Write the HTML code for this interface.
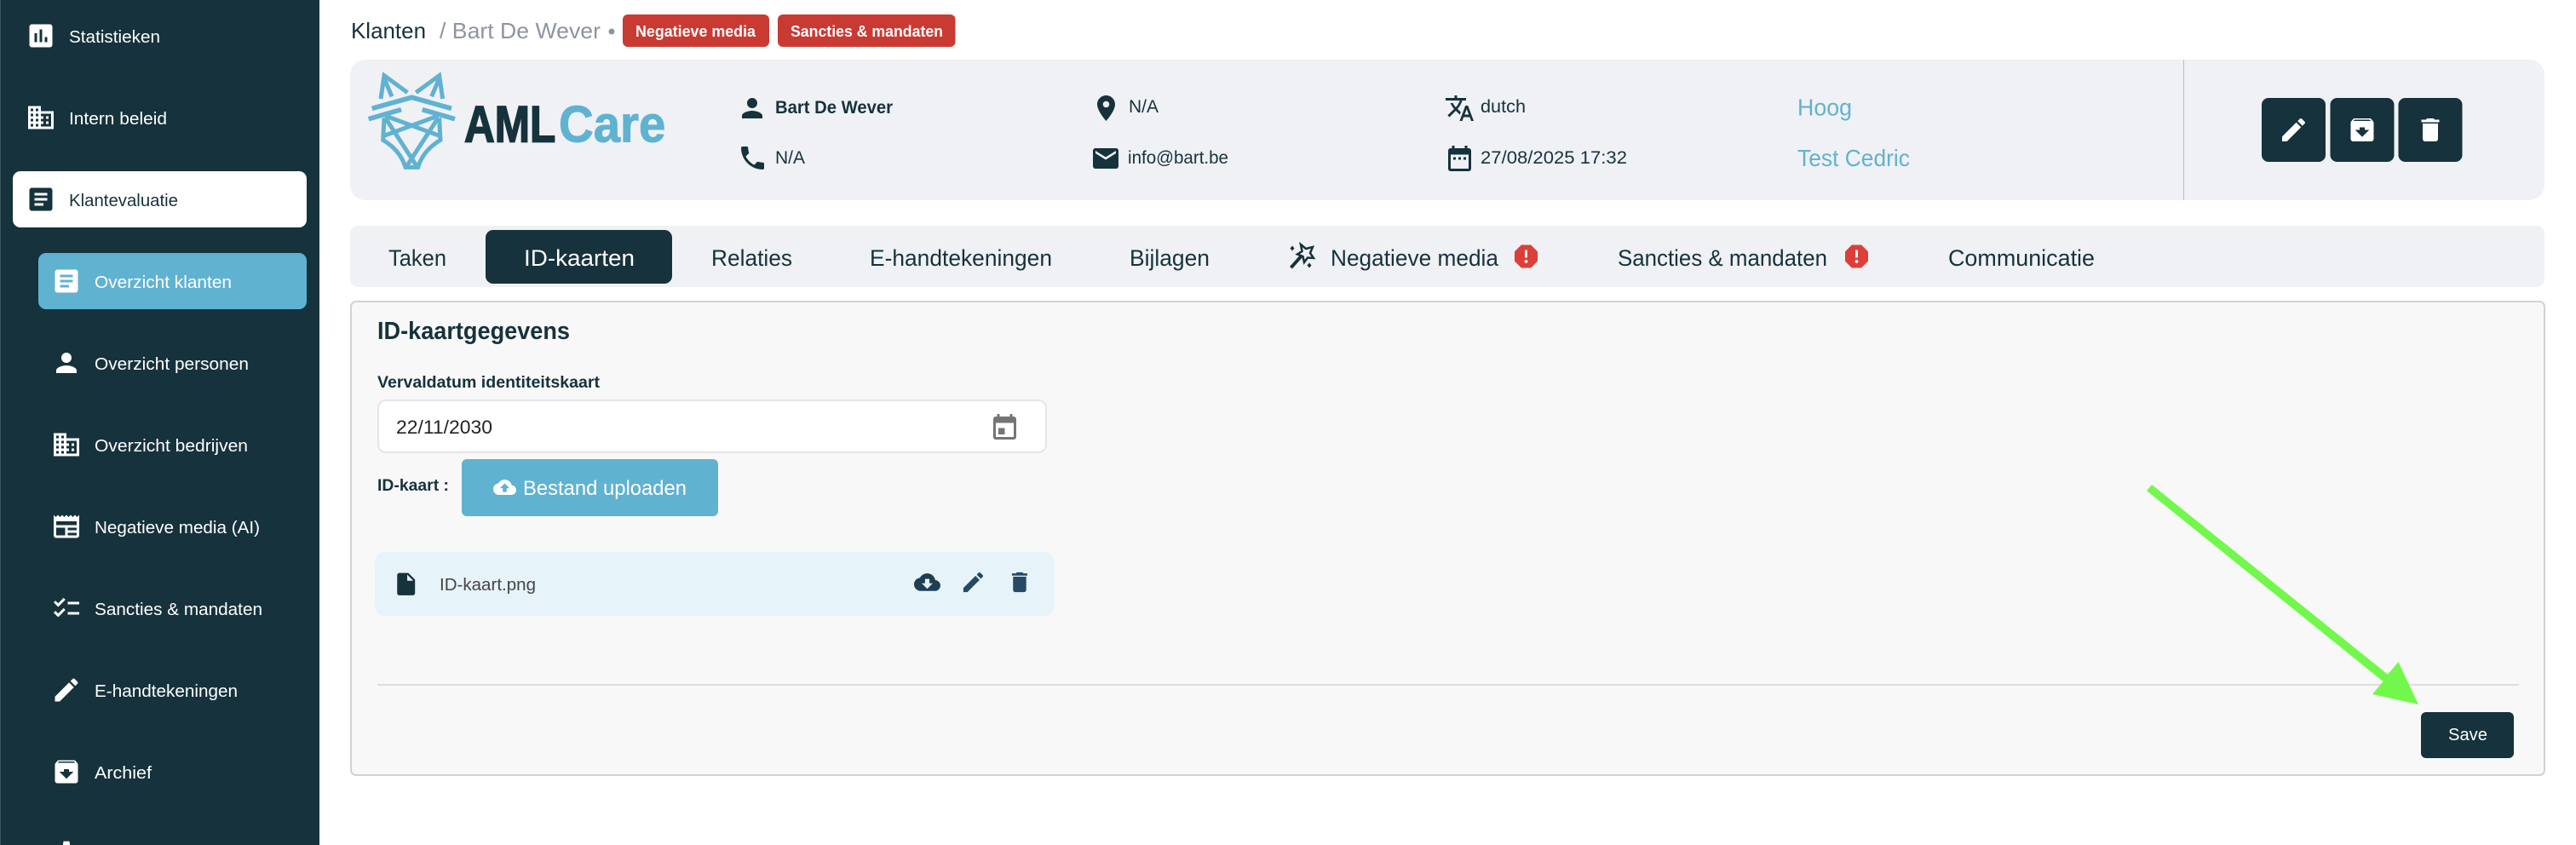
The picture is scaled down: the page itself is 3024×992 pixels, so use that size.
<!DOCTYPE html>
<html lang="nl">
<head>
<meta charset="utf-8">
<title>AMLCare - Klanten</title>
<style>
html,body{margin:0;padding:0;background:#fff;width:3024px;height:992px;overflow:hidden}
svg{display:block}
text{font-family:"Liberation Sans",sans-serif}
.s{font-size:20.7px;fill:#fff}
.t{font-size:26.5px;fill:#16323c}
.i{font-size:21px;fill:#16323c}
.b{font-size:18px;font-weight:700;fill:#fff}
.h{font-size:28px;fill:#60b2d1}
</style>
</head>
<body>
<svg xmlns="http://www.w3.org/2000/svg" width="3024" height="992" viewBox="0 0 3024 992">
<defs>
<path id="assess" d="M19 3H5c-1.1 0-2 .9-2 2v14c0 1.1.9 2 2 2h14c1.1 0 2-.9 2-2V5c0-1.1-.9-2-2-2zM9 17H7v-7h2v7zm4 0h-2V7h2v10zm4 0h-2v-4h2v4z"/>
<path id="domain" d="M12 7V3H2v18h20V7H12zM6 19H4v-2h2v2zm0-4H4v-2h2v2zm0-4H4V9h2v2zm0-4H4V5h2v2zm4 12H8v-2h2v2zm0-4H8v-2h2v2zm0-4H8V9h2v2zm0-4H8V5h2v2zm10 12h-8v-2h2v-2h-2v-2h2v-2h-2V9h8v10zm-2-8h-2v2h2v-2zm0 4h-2v2h2v-2z"/>
<path id="article" d="M19 3H5c-1.1 0-2 .9-2 2v14c0 1.1.9 2 2 2h14c1.1 0 2-.9 2-2V5c0-1.1-.9-2-2-2zm-5 14H7v-2h7v2zm3-4H7v-2h10v2zm0-4H7V7h10v2z"/>
<path id="person" d="M12 12c2.21 0 4-1.79 4-4s-1.79-4-4-4-4 1.79-4 4 1.79 4 4 4zm0 2c-2.67 0-8 1.34-8 4v2h16v-2c0-2.66-5.33-4-8-4z"/>
<path id="news" d="M22 3l-1.67 1.67L18.67 3 17 4.67 15.33 3l-1.66 1.67L12 3l-1.67 1.67L8.67 3 7 4.67 5.33 3 3.67 4.67 2 3v16c0 1.1.9 2 2 2h16c1.1 0 2-.9 2-2V3zM11 19H4v-6h7v6zm9 0h-7v-2h7v2zm0-4h-7v-2h7v2zm0-4H4V8h16v3z"/>
<path id="check" d="M22 7h-9v2h9V7zm0 8h-9v2h9v-2zM5.54 11L2 7.46l1.41-1.41 2.12 2.12 4.24-4.24 1.41 1.41L5.54 11zm0 8L2 15.46l1.41-1.41 2.12 2.12 4.24-4.24 1.41 1.41L5.54 19z"/>
<path id="edit" d="M3 17.25V21h3.75L17.81 9.94l-3.75-3.75L3 17.25zM20.71 7.04c.39-.39.39-1.02 0-1.41l-2.34-2.34c-.39-.39-1.02-.39-1.41 0l-1.83 1.83 3.75 3.75 1.83-1.83z"/>
<path id="archive" d="M20.54 5.23l-1.39-1.68C18.88 3.21 18.47 3 18 3H6c-.47 0-.88.21-1.16.55L3.46 5.23C3.17 5.57 3 6.02 3 6.5V19c0 1.1.9 2 2 2h14c1.1 0 2-.9 2-2V6.500c0-.48-.17-.93-.46-1.27zM12 17.5L6.5 12H10v-2h4v2h3.5L12 17.5zM5.12 5l.81-1h12l.94 1H5.12z"/>
<path id="del" d="M6 19c0 1.1.9 2 2 2h8c1.1 0 2-.9 2-2V7H6v12zM19 4h-3.5l-1-1h-5l-1 1H5v2h14V4z"/>
<path id="gear" d="M19.14,12.94c0.04-0.3,0.06-0.61,0.06-0.94c0-0.32-0.02-0.64-0.07-0.94l2.03-1.58c0.18-0.14,0.23-0.41,0.12-0.61l-1.92-3.32c-0.12-0.22-0.37-0.29-0.59-0.22l-2.39,0.96c-0.5-0.38-1.03-0.7-1.62-0.94L14.4,2.81c-0.04-0.24-0.24-0.41-0.48-0.41h-3.84c-0.24,0-0.43,0.17-0.47,0.41L9.25,5.35C8.66,5.59,8.12,5.92,7.63,6.29L5.24,5.33c-0.22-0.08-0.47,0-0.59,0.22L2.74,8.87C2.62,9.08,2.66,9.34,2.86,9.48l2.03,1.58C4.84,11.36,4.8,11.69,4.8,12s0.02,0.64,0.07,0.94l-2.03,1.58c-0.18,0.14-0.23,0.41-0.12,0.61l1.92,3.32c0.12,0.22,0.37,0.29,0.59,0.22l2.39-0.96c0.5,0.38,1.03,0.7,1.62,0.94l0.36,2.54c0.05,0.24,0.24,0.41,0.48,0.41h3.84c0.24,0,0.44-0.17,0.47-0.41l0.36-2.54c0.59-0.24,1.13-0.56,1.62-0.94l2.39,0.96c0.22,0.08,0.47,0,0.59-0.22l1.92-3.32c0.12-0.22,0.07-0.47-0.12-0.61L19.14,12.94z M12,15.6c-1.98,0-3.6-1.62-3.6-3.6s1.62-3.6,3.6-3.6s3.6,1.62,3.6,3.6S13.98,15.6,12,15.6z"/>
<path id="place" d="M12 2C8.13 2 5 5.13 5 9c0 5.25 7 13 7 13s7-7.75 7-13c0-3.87-3.13-7-7-7zm0 9.5c-1.38 0-2.5-1.12-2.5-2.5s1.12-2.5 2.5-2.5 2.5 1.12 2.5 2.5-1.12 2.5-2.5 2.5z"/>
<path id="phone" d="M6.62 10.79c1.44 2.83 3.76 5.14 6.59 6.59l2.2-2.2c.27-.27.67-.36 1.02-.24 1.12.37 2.33.57 3.57.57.55 0 1 .45 1 1V20c0 .55-.45 1-1 1-9.39 0-17-7.61-17-17 0-.55.45-1 1-1h3.5c.55 0 1 .45 1 1 0 1.25.2 2.45.57 3.57.11.35.03.74-.25 1.02l-2.2 2.2z"/>
<path id="mail" d="M20 4H4c-1.1 0-1.99.9-1.99 2L2 18c0 1.1.9 2 2 2h16c1.1 0 2-.9 2-2V6c0-1.1-.9-2-2-2zm0 4l-8 5-8-5V6l8 5 8-5v2z"/>
<path id="trans" d="M12.87 15.07l-2.54-2.51.03-.03c1.74-1.94 2.98-4.17 3.71-6.53H17V4h-7V2H8v2H1v1.99h11.17C11.5 7.92 10.44 9.75 9 11.35 8.07 10.32 7.3 9.19 6.69 8h-2c.73 1.63 1.73 3.17 2.98 4.56l-5.09 5.02L4 19l5-5 3.11 3.11.76-2.04zM18.5 10h-2L12 22h2l1.12-3h4.75L21 22h2l-4.5-12zm-2.62 7l1.62-4.33L19.12 17h-3.24z"/>
<path id="cal" d="M9 11H7v2h2v-2zm4 0h-2v2h2v-2zm4 0h-2v2h2v-2zm2-7h-1V2h-2v2H8V2H6v2H5c-1.11 0-1.99.9-1.99 2L3 20c0 1.1.89 2 2 2h14c1.1 0 2-.9 2-2V6c0-1.1-.9-2-2-2zm0 16H5V9h14v11z"/>
<path id="event" d="M12 12H7v5h5v-5zM16 1v2H8V1H6v2H5c-1.11 0-1.99.89-1.99 2L3 19c0 1.1.89 2 2 2h14c1.1 0 2-.9 2-2V5c0-1.1-.9-2-2-2h-1V1h-2zm3 18H5V8h14v11z"/>
<path id="cup" d="M19.35 10.04C18.67 6.59 15.64 4 12 4 9.11 4 6.6 5.64 5.35 8.04 2.34 8.36 0 10.91 0 14c0 3.31 2.69 6 6 6h13c2.76 0 5-2.24 5-5 0-2.64-2.05-4.78-4.65-4.96zM14 13v4h-4v-4H7l5-5 5 5h-3z"/>
<path id="cdown" d="M19.35 10.04C18.67 6.59 15.64 4 12 4 9.11 4 6.6 5.64 5.35 8.04 2.34 8.36 0 10.91 0 14c0 3.31 2.69 6 6 6h13c2.76 0 5-2.24 5-5 0-2.64-2.05-4.78-4.65-4.96zM17 13l-5 5-5-5h3V9h4v4h3z"/>
<path id="file" d="M6 2c-1.1 0-1.99.9-1.99 2L4 20c0 1.1.89 2 2 2h12c1.1 0 2-.9 2-2V8l-6-6H6zm7 7V3.5L18.5 9H13z"/>
<path id="report" d="M15.73 3H8.27L3 8.27v7.46L8.27 21h7.46L21 15.73V8.27L15.73 3zM12 17.3c-.72 0-1.3-.58-1.3-1.3 0-.72.58-1.3 1.3-1.3.72 0 1.3.58 1.3 1.3 0 .72-.58 1.3-1.3 1.3zm1-4.3h-2V7h2v6z"/>
</defs>

<rect width="3024" height="992" fill="#fff"/>

<!-- Sidebar -->
<rect x="0" y="0" width="375" height="992" fill="#16323c"/>
<rect x="0" y="0" width="1" height="992" fill="#3b5560"/>
<rect x="15" y="201" width="345" height="66" rx="9" fill="#fff"/>
<rect x="45" y="297" width="315" height="66" rx="9" fill="#60b2d1"/>

<g fill="#fff">
<use href="#assess" transform="translate(30 24) scale(1.5)"/>
<use href="#domain" transform="translate(30 120) scale(1.5)"/>
<use href="#article" transform="translate(30 216) scale(1.5)" fill="#16323c"/>
<use href="#article" transform="translate(60 312) scale(1.5)"/>
<use href="#person" transform="translate(60 408) scale(1.5)"/>
<use href="#domain" transform="translate(60 504) scale(1.5)"/>
<use href="#news" transform="translate(60 600) scale(1.5)"/>
<use href="#check" transform="translate(60 696) scale(1.5)"/>
<use href="#edit" transform="translate(60 792) scale(1.5)"/>
<use href="#archive" transform="translate(60 888) scale(1.5)"/>
<use href="#gear" transform="translate(60 984) scale(1.5)"/>
</g>

<text class="s" x="81" y="50" textLength="107" lengthAdjust="spacingAndGlyphs">Statistieken</text>
<text class="s" x="81" y="146" textLength="115" lengthAdjust="spacingAndGlyphs">Intern beleid</text>
<text class="s" x="81" y="242" textLength="128" lengthAdjust="spacingAndGlyphs" style="fill:#16323c">Klantevaluatie</text>
<text class="s" x="111" y="338" textLength="161" lengthAdjust="spacingAndGlyphs">Overzicht klanten</text>
<text class="s" x="111" y="434" textLength="181" lengthAdjust="spacingAndGlyphs">Overzicht personen</text>
<text class="s" x="111" y="530" textLength="180" lengthAdjust="spacingAndGlyphs">Overzicht bedrijven</text>
<text class="s" x="111" y="626" textLength="194" lengthAdjust="spacingAndGlyphs">Negatieve media (AI)</text>
<text class="s" x="111" y="722" textLength="197" lengthAdjust="spacingAndGlyphs">Sancties &amp; mandaten</text>
<text class="s" x="111" y="818" textLength="168" lengthAdjust="spacingAndGlyphs">E-handtekeningen</text>
<text class="s" x="111" y="914" textLength="67" lengthAdjust="spacingAndGlyphs">Archief</text>

<!-- Breadcrumb -->
<text x="412" y="45" font-size="26" fill="#16323c" textLength="88" lengthAdjust="spacingAndGlyphs">Klanten</text>
<text x="516" y="45" font-size="26" fill="#8e93a3" textLength="189" lengthAdjust="spacingAndGlyphs">/ Bart De Wever</text>
<circle cx="718" cy="37" r="3.5" fill="#8e93a3"/>
<rect x="731" y="17" width="172" height="38" rx="6" fill="#c93a33"/>
<text class="b" x="746" y="43" textLength="141" lengthAdjust="spacingAndGlyphs">Negatieve media</text>
<rect x="913" y="17" width="208.500" height="38" rx="6" fill="#c93a33"/>
<text class="b" x="928" y="43" textLength="179" lengthAdjust="spacingAndGlyphs">Sancties &amp; mandaten</text>

<!-- Header panel -->
<rect x="411" y="70" width="2576" height="165" rx="18" fill="#f0f1f5"/>
<rect x="2563" y="70" width="1" height="165" fill="#bdbdbd"/>

<!-- Logo -->
<svg x="420" y="70" width="400" height="160" viewBox="0 0 1200 480">
<g fill="none" stroke="#60b2d1" stroke-width="15" stroke-linejoin="miter">
<path d="M81 138 L93 56 L175 116"/>
<path d="M93 66 L120 130"/>
<path d="M299 138 L287 56 L205 116"/>
<path d="M287 66 L260 130"/>
<path d="M50 172 L190 133 L330 172" stroke-width="17"/>
<path d="M38 209 L153 176" stroke-width="17"/>
<path d="M342 209 L227 176" stroke-width="17"/>
<path d="M93 205 L89 283 Q150 320 168 379 L212 379 Q230 320 291 283 L287 205"/>
<path d="M97 198 L287 268"/>
<path d="M283 198 L93 268"/>
<path d="M97 205 L190 348"/>
<path d="M283 205 L190 348"/>
<path d="M190 348 L170 379"/>
<path d="M190 348 L210 379"/>
</g>
<text x="375" y="290" font-size="180" font-weight="700" fill="#16323c" stroke="#16323c" stroke-width="5" textLength="322" lengthAdjust="spacingAndGlyphs">AML</text>
<text x="708" y="290" font-size="180" font-weight="700" fill="#60b2d1" stroke="#60b2d1" stroke-width="3" textLength="376" lengthAdjust="spacingAndGlyphs">Care</text>
</svg>

<!-- Header info -->
<g fill="#16323c">
<use href="#person" transform="translate(865 109) scale(1.5)"/>
<use href="#phone" transform="translate(865.500 167.500) scale(1.5)"/>
<use href="#place" transform="translate(1280.500 109) scale(1.5)"/>
<use href="#mail" transform="translate(1280 168) scale(1.5)"/>
<use href="#trans" transform="translate(1695.500 109) scale(1.5)"/>
<use href="#cal" transform="translate(1695.500 168) scale(1.5)"/>
</g>
<text class="i" x="910" y="133" textLength="138" lengthAdjust="spacingAndGlyphs" font-weight="700">Bart De Wever</text>
<text class="i" x="910" y="192" textLength="35" lengthAdjust="spacingAndGlyphs">N/A</text>
<text class="i" x="1325" y="132" textLength="35" lengthAdjust="spacingAndGlyphs">N/A</text>
<text class="i" x="1324" y="192" textLength="118" lengthAdjust="spacingAndGlyphs">info@bart.be</text>
<text class="i" x="1738" y="132" textLength="53" lengthAdjust="spacingAndGlyphs">dutch</text>
<text class="i" x="1738" y="192" textLength="172" lengthAdjust="spacingAndGlyphs">27/08/2025 17:32</text>
<text class="h" x="2110" y="135.500" textLength="64" lengthAdjust="spacingAndGlyphs">Hoog</text>
<text class="h" x="2110" y="195" textLength="132" lengthAdjust="spacingAndGlyphs">Test Cedric</text>

<!-- Action buttons -->
<rect x="2655" y="115" width="75" height="75" rx="8" fill="#16323c"/>
<rect x="2735.500" y="115" width="75" height="75" rx="8" fill="#16323c"/>
<rect x="2815.500" y="115" width="75" height="75" rx="8" fill="#16323c"/>
<g fill="#fff">
<use href="#edit" transform="translate(2674.500 134.500) scale(1.5)"/>
<use href="#archive" transform="translate(2755 134.500) scale(1.5)"/>
<use href="#del" transform="translate(2835 134.500) scale(1.5)"/>
</g>

<!-- Tabs -->
<rect x="411" y="265" width="2576" height="72" rx="9" fill="#f0f1f5"/>
<rect x="570" y="270" width="219" height="63" rx="9" fill="#16323c"/>
<text class="t" x="456" y="312" textLength="68" lengthAdjust="spacingAndGlyphs">Taken</text>
<text class="t" x="615" y="312" textLength="130" lengthAdjust="spacingAndGlyphs" style="fill:#fff">ID-kaarten</text>
<text class="t" x="835" y="312" textLength="95" lengthAdjust="spacingAndGlyphs">Relaties</text>
<text class="t" x="1021" y="312" textLength="214" lengthAdjust="spacingAndGlyphs">E-handtekeningen</text>
<text class="t" x="1326" y="312" textLength="94" lengthAdjust="spacingAndGlyphs">Bijlagen</text>
<text class="t" x="1562" y="312" textLength="197" lengthAdjust="spacingAndGlyphs">Negatieve media</text>
<text class="t" x="1899" y="312" textLength="246" lengthAdjust="spacingAndGlyphs">Sancties &amp; mandaten</text>
<text class="t" x="2287" y="312" textLength="172" lengthAdjust="spacingAndGlyphs">Communicatie</text>
<g fill="#16323c">
<path d="M1514 313 L1526 299.500 L1529 302 L1517 315.500 Z"/>
<path d="M1527 287 L1533 292 L1541 290 L1538 297 L1542 303 L1535 302.500 L1531 308 L1529.500 301 L1523 298.500 L1528.500 295 Z" fill="none" stroke="#16323c" stroke-width="2.500"/>
<path d="M1517 288.500 L1519.500 291.500 L1517 294.500 L1514.500 291.500 Z"/>
<path d="M1537 308.500 L1539.500 311.500 L1537 314.500 L1534.500 311.500 Z"/>
</g>
<g fill="#dc3f38">
<use href="#report" transform="translate(1773.500 283) scale(1.5)"/>
<use href="#report" transform="translate(2161.500 283) scale(1.5)"/>
</g>

<!-- Card -->
<rect x="412" y="354" width="2575" height="556" rx="6" fill="#f8f8f8" stroke="#d2d2d2" stroke-width="2"/>
<text x="443" y="398" font-size="28.400" font-weight="700" fill="#16323c" textLength="226" lengthAdjust="spacingAndGlyphs">ID-kaartgegevens</text>
<text x="443" y="455" font-size="19.500" font-weight="700" fill="#16323c" textLength="261" lengthAdjust="spacingAndGlyphs">Vervaldatum identiteitskaart</text>
<rect x="444" y="470" width="784" height="61" rx="9" fill="#fff" stroke="#e6e6e6" stroke-width="2"/>
<text x="465" y="509" font-size="22.500" fill="#222" textLength="113" lengthAdjust="spacingAndGlyphs">22/11/2030</text>
<use href="#event" transform="translate(1161.500 484.500) scale(1.5)" fill="#757575"/>
<text x="443" y="576" font-size="19.500" font-weight="700" fill="#16323c" textLength="84" lengthAdjust="spacingAndGlyphs">ID-kaart :</text>
<rect x="542" y="539" width="301" height="67" rx="6" fill="#60b2d1"/>
<use href="#cup" transform="translate(579 558.500) scale(1.125)" fill="#fff"/>
<text x="614" y="581" font-size="23.800" fill="#fff" textLength="192" lengthAdjust="spacingAndGlyphs">Bestand uploaden</text>

<!-- File row -->
<rect x="440" y="648" width="798" height="75" rx="12" fill="#e6f4fa"/>
<use href="#file" transform="translate(461 670) scale(1.31)" fill="#16323c"/>
<text x="516" y="693" font-size="20.500" fill="#444" textLength="113" lengthAdjust="spacingAndGlyphs">ID-kaart.png</text>
<g fill="#264a66">
<use href="#cdown" transform="translate(1073 668) scale(1.29)" fill="#1c3f55"/>
<use href="#edit" transform="translate(1127 668) scale(1.29)"/>
<use href="#del" transform="translate(1181.500 668) scale(1.29)"/>
</g>

<!-- Footer -->
<rect x="443" y="803" width="2514" height="2" fill="#dedede"/>
<rect x="2842" y="836" width="109" height="54" rx="6" fill="#16323c"/>
<text x="2874" y="869" font-size="20" fill="#fff" textLength="46" lengthAdjust="spacingAndGlyphs">Save</text>

<!-- Arrow -->
<polygon points="2520,576 2526,569 2803,791.700 2815.500,777 2839,827 2785,815 2797.500,800" fill="#72f84c"/>
</svg>
</body>
</html>
